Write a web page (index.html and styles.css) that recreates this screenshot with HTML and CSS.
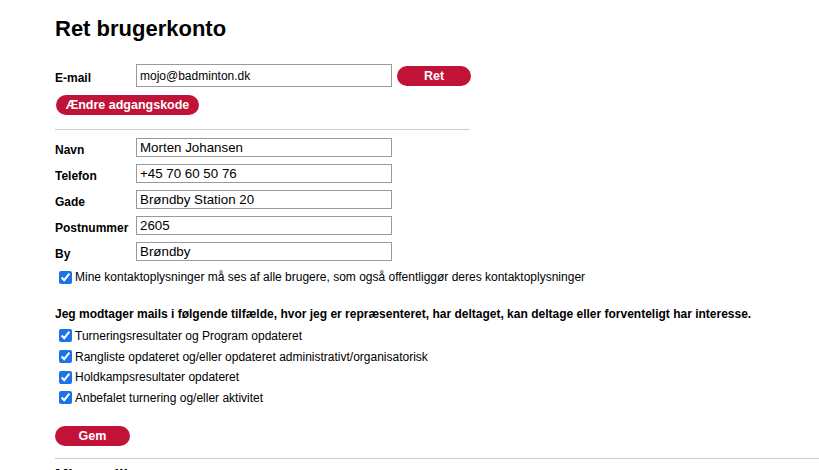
FILE: index.html
```html
<!DOCTYPE html>
<html lang="da">
<head>
<meta charset="utf-8">
<title>Ret brugerkonto</title>
<link rel="stylesheet" href="styles.css">
</head>
<body>
<div class="page">
  <h1 class="title">Ret brugerkonto</h1>

  <div class="email-row">
    <label class="lbl">E-mail</label>
    <input class="field email" type="text" value="mojo@badminton.dk">
    <button class="btn btn-ret">Ret</button>
  </div>
  <button class="btn btn-pw">Ændre adgangskode</button>

  <hr class="sep short">

  <div class="fields">
    <div class="row"><label class="lbl">Navn</label><input class="field" type="text" value="Morten Johansen"></div>
    <div class="row"><label class="lbl">Telefon</label><input class="field" type="text" value="+45 70 60 50 76"></div>
    <div class="row"><label class="lbl">Gade</label><input class="field" type="text" value="Brøndby Station 20"></div>
    <div class="row"><label class="lbl">Postnummer</label><input class="field" type="text" value="2605"></div>
    <div class="row"><label class="lbl">By</label><input class="field" type="text" value="Brøndby"></div>
  </div>

  <label class="check first"><input type="checkbox" checked>Mine kontaktoplysninger må ses af alle brugere, som også offentliggør deres kontaktoplysninger</label>

  <p class="mails">Jeg modtager mails i følgende tilfælde, hvor jeg er repræsenteret, har deltaget, kan deltage eller forventeligt har interesse.</p>

  <div class="checks">
    <label class="check"><input type="checkbox" checked>Turneringsresultater og Program opdateret</label>
    <label class="check"><input type="checkbox" checked>Rangliste opdateret og/eller opdateret administrativt/organisatorisk</label>
    <label class="check"><input type="checkbox" checked>Holdkampsresultater opdateret</label>
    <label class="check"><input type="checkbox" checked>Anbefalet turnering og/eller aktivitet</label>
  </div>

  <button class="btn btn-gem">Gem</button>

  <hr class="sep full">
  <h2 class="sub">Mine spillere</h2>
</div>
</body>
</html>
```

FILE: styles.css
```css
html, body {
  margin: 0;
  padding: 0;
  background: #fff;
}
body {
  font-family: "Liberation Sans", Arial, sans-serif;
  color: #000;
  font-size: 12px;
  overflow: hidden;
}
.page {
  padding: 16px 0 0 55px;
}
.title {
  margin: 0;
  font-size: 22px;
  line-height: 25px;
  font-weight: bold;
}
.email-row {
  display: flex;
  align-items: center;
  margin-top: 23px;
  height: 23px;
}
.lbl {
  width: 81px;
  flex: none;
  font-weight: bold;
  font-size: 12px;
  padding-top: 5px;
  box-sizing: border-box;
}
.field {
  box-sizing: border-box;
  width: 256px;
  height: 19px;
  margin: 0;
  padding: 0 3px;
  border: 1px solid #999;
  border-radius: 0;
  font-family: "Liberation Sans", Arial, sans-serif;
  font-size: 13.33px;
  color: #000;
  background: #fff;
  outline: none;
}
.field.email {
  height: 23px;
  font-size: 12px;
}
.btn {
  box-sizing: border-box;
  height: 20px;
  border: none;
  border-radius: 10px;
  background: #c01337;
  color: #fff;
  font-family: "Liberation Sans", Arial, sans-serif;
  font-weight: bold;
  font-size: 12.5px;
  padding: 0;
  cursor: pointer;
  display: block;
}
.btn-ret {
  width: 74px;
  margin-left: 5px;
}
.btn-pw {
  width: 143px;
  margin: 8px 0 0 1px;
}
.btn-gem {
  width: 75px;
  margin-top: 18px;
}
.sep {
  border: none;
  border-top: 1px solid #ccc;
  margin: 0;
  height: 0;
}
.sep.short {
  width: 415px;
  margin-top: 14px;
}
.sep.full {
  margin-top: 12px;
}
.fields {
  display: flex;
  flex-direction: column;
  gap: 7px;
  margin-top: 8px;
}
.row {
  display: flex;
  align-items: center;
  height: 19px;
}
.check {
  display: flex;
  align-items: center;
  height: 20.67px;
  font-size: 12px;
}
.check input {
  width: 13px;
  height: 13px;
  margin: 0 3px 0 4px;
  accent-color: #1a73e8;
}
.check.first {
  margin-top: 6px;
}
.mails {
  margin: 18px 0 0;
  font-weight: bold;
  font-size: 12px;
  line-height: 16px;
}
.checks {
  display: flex;
  flex-direction: column;
  margin-top: 4px;
}
.sub {
  margin: 7px 0 0;
  font-size: 16px;
  font-weight: bold;
  line-height: 20px;
}
```
